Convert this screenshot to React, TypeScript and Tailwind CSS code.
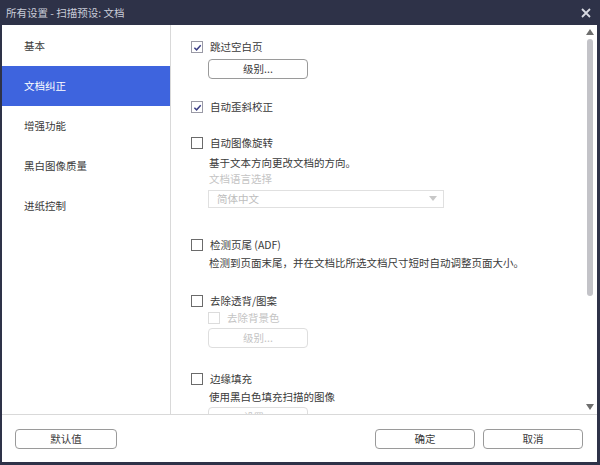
import React from "react";

const font = { fontFamily: '"Microsoft YaHei", "Noto Sans CJK SC", "Noto Sans", sans-serif' };

function Checkbox({ checked = false, disabled = false }: { checked?: boolean; disabled?: boolean }) {
  return (
    <span
      className={`w-[12px] h-[12px] shrink-0 border flex items-center justify-center bg-white ${
        disabled ? "border-[#dcdcdc]" : checked ? "border-[#9a9aa6]" : "border-[#6b6b6b]"
      }`}
    >
      {checked && (
        <svg width="9" height="9" viewBox="0 0 10 10">
          <path d="M1.5 5.2 L4 7.6 L8.6 2.4" fill="none" stroke="#3c3f86" strokeWidth="1.6" />
        </svg>
      )}
    </span>
  );
}

function CheckRow({
  label,
  checked,
  disabled,
  className = "",
}: {
  label: string;
  checked?: boolean;
  disabled?: boolean;
  className?: string;
}) {
  return (
    <div className={`flex items-center gap-[7px] h-[16px] ${className}`}>
      <Checkbox checked={checked} disabled={disabled} />
      <span className={`text-[10.5px] leading-[16px] ${disabled ? "text-[#c4c4c4]" : "text-[#3a3a3a]"}`}>{label}</span>
    </div>
  );
}

function LevelButton({ disabled = false, className = "" }: { disabled?: boolean; className?: string }) {
  return (
    <div
      className={`w-[100px] h-[20px] rounded-[4px] border flex items-center justify-center text-[10.5px] ${
        disabled ? "border-[#dedede] text-[#c4c4c4]" : "border-[#9a9a9a] text-[#3a3a3a]"
      } ${className}`}
    >
      级别...
    </div>
  );
}

export default function App() {
  const nav = ["基本", "文档纠正", "增强功能", "黑白图像质量", "进纸控制"];
  return (
    <div className="w-[600px] h-[465px] bg-[#2e3248] flex flex-col" style={font}>
      <div className="h-[25px] shrink-0 flex items-center justify-between pl-[6px] pr-[9px]">
        <span className="text-[10.5px] text-[#c9ccd8]">所有设置 - 扫描预设: 文档</span>
        <svg width="10" height="10" viewBox="0 0 10 10">
          <path d="M1 1 L9 9 M9 1 L1 9" stroke="#d8dae2" strokeWidth="1.8" />
        </svg>
      </div>

      <div className="flex-1 ml-[2px] mr-[3px] mb-[3px] bg-white flex flex-col">
        <div className="h-[390px] shrink-0 flex border-b border-[#d9d9d9]">
          <div className="w-[169px] shrink-0 border-r border-[#d9d9d9] pt-[1px]">
            {nav.map((n, i) => (
              <div
                key={n}
                className={`h-[40px] flex items-center pl-[22px] text-[10.5px] ${
                  i === 1 ? "bg-[#3e64de] text-white" : "text-[#3a3a3a]"
                }`}
              >
                {n}
              </div>
            ))}
          </div>

          <div className="flex-1 overflow-hidden pl-[20px] pt-[14px]">
            <CheckRow label="跳过空白页" checked />
            <LevelButton className="ml-[17px] mt-[4px]" />

            <CheckRow label="自动歪斜校正" checked className="mt-[20px]" />

            <CheckRow label="自动图像旋转" className="mt-[20px]" />
            <div className="ml-[18px] mt-[4px] text-[10.5px] leading-[16px] text-[#3a3a3a]">基于文本方向更改文档的方向。</div>
            <div className="ml-[18px] text-[10.5px] leading-[16px] text-[#c4c4c4]">文档语言选择</div>
            <div className="ml-[17px] mt-[3px] w-[236px] h-[18px] border border-[#e0e0e0] flex items-center justify-between pl-[8px] pr-[6px]">
              <span className="text-[10.5px] text-[#bdbdbd]">简体中文</span>
              <svg width="8" height="6" viewBox="0 0 8 6">
                <path d="M0 0 H8 L4 5 Z" fill="#c8c8c8" />
              </svg>
            </div>

            <CheckRow label="检测页尾 (ADF)" className="mt-[29px]" />
            <div className="ml-[18px] mt-[2px] text-[10.5px] leading-[16px] text-[#3a3a3a] whitespace-nowrap">
              检测到页面末尾，并在文档比所选文档尺寸短时自动调整页面大小。
            </div>

            <CheckRow label="去除透背/图案" className="mt-[22px]" />
            <CheckRow label="去除背景色" disabled className="ml-[17px] mt-[1px]" />
            <LevelButton disabled className="ml-[17px] mt-[2px]" />

            <CheckRow label="边缘填充" className="mt-[23px]" />
            <div className="ml-[18px] mt-[2px] text-[10.5px] leading-[16px] text-[#3a3a3a]">使用黑白色填充扫描的图像</div>
            <div className="ml-[17px] mt-[2px] w-[100px] h-[20px] rounded-[4px] border border-[#dedede] flex items-start justify-center pt-[1px] text-[10px] text-[#c4c4c4]">
              设置...
            </div>
          </div>

          <div className="w-[14px] shrink-0 flex flex-col items-center pt-[4px] pb-[4px]">
            <svg width="8" height="6" viewBox="0 0 8 6" className="shrink-0">
              <path d="M0 6 H8 L4 0 Z" fill="#6e6e6e" />
            </svg>
            <div className="mt-[4px] w-[6px] h-[257px] rounded-full bg-[#c3c3c8]" />
            <div className="flex-1" />
            <svg width="8" height="6" viewBox="0 0 8 6" className="shrink-0">
              <path d="M0 0 H8 L4 6 Z" fill="#6e6e6e" />
            </svg>
          </div>
        </div>

        <div className="flex-1 flex items-start justify-between pt-[14px] pl-[13px] pr-[14px]">
          <div className="w-[102px] h-[20px] rounded-[4px] border border-[#9a9a9a] flex items-center justify-center text-[10.5px] text-[#3a3a3a]">
            默认值
          </div>
          <div className="flex gap-[8px]">
            <div className="w-[100px] h-[20px] rounded-[4px] border border-[#9a9a9a] flex items-center justify-center text-[10.5px] text-[#3a3a3a]">
              确定
            </div>
            <div className="w-[100px] h-[20px] rounded-[4px] border border-[#9a9a9a] flex items-center justify-center text-[10.5px] text-[#3a3a3a]">
              取消
            </div>
          </div>
        </div>
      </div>
    </div>
  );
}
